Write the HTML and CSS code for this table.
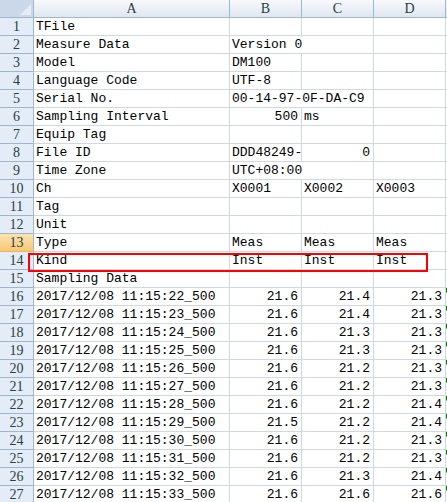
FILE: index.html
```html
<!DOCTYPE html>
<html>
<head>
<meta charset="utf-8">
<link rel="stylesheet" href="styles.css">
</head>
<body>
<div class="sheet">
  <div class="corner"><span class="tri"></span></div>
  <div class="ch">A</div><div class="ch">B</div><div class="ch">C</div><div class="ch">D</div><div class="ch"></div>

  <div class="rh">1</div><div class="c">TFile</div><div class="c"></div><div class="c"></div><div class="c"></div><div class="c"></div>
  <div class="rh">2</div><div class="c">Measure Data</div><div class="c s2">Version 0</div><div class="c"></div><div class="c"></div>
  <div class="rh">3</div><div class="c">Model</div><div class="c">DM100</div><div class="c"></div><div class="c"></div><div class="c"></div>
  <div class="rh">4</div><div class="c">Language Code</div><div class="c">UTF-8</div><div class="c"></div><div class="c"></div><div class="c"></div>
  <div class="rh">5</div><div class="c">Serial No.</div><div class="c s2">00-14-97-0F-DA-C9</div><div class="c"></div><div class="c"></div>
  <div class="rh">6</div><div class="c">Sampling Interval</div><div class="c r">500</div><div class="c">ms</div><div class="c"></div><div class="c"></div>
  <div class="rh">7</div><div class="c">Equip Tag</div><div class="c"></div><div class="c"></div><div class="c"></div><div class="c"></div>
  <div class="rh">8</div><div class="c">File ID</div><div class="c">DDD48249-</div><div class="c r">0</div><div class="c"></div><div class="c"></div>
  <div class="rh">9</div><div class="c">Time Zone</div><div class="c s2">UTC+08:00</div><div class="c"></div><div class="c"></div>
  <div class="rh">10</div><div class="c">Ch</div><div class="c">X0001</div><div class="c">X0002</div><div class="c">X0003</div><div class="c"></div>
  <div class="rh">11</div><div class="c">Tag</div><div class="c"></div><div class="c"></div><div class="c"></div><div class="c"></div>
  <div class="rh">12</div><div class="c">Unit</div><div class="c"></div><div class="c"></div><div class="c"></div><div class="c"></div>
  <div class="rh act">13</div><div class="c">Type</div><div class="c">Meas</div><div class="c">Meas</div><div class="c">Meas</div><div class="c"></div>
  <div class="rh">14</div><div class="c">Kind</div><div class="c">Inst</div><div class="c">Inst</div><div class="c">Inst</div><div class="c"></div>
  <div class="rh">15</div><div class="c">Sampling Data</div><div class="c"></div><div class="c"></div><div class="c"></div><div class="c"></div>
  <div class="rh">16</div><div class="c">2017/12/08 11:15:22_500</div><div class="c r">21.6</div><div class="c r">21.4</div><div class="c r">21.3</div><div class="c e"><span class="err"></span></div>
  <div class="rh">17</div><div class="c">2017/12/08 11:15:23_500</div><div class="c r">21.6</div><div class="c r">21.4</div><div class="c r">21.3</div><div class="c e"><span class="err"></span></div>
  <div class="rh">18</div><div class="c">2017/12/08 11:15:24_500</div><div class="c r">21.6</div><div class="c r">21.3</div><div class="c r">21.3</div><div class="c e"><span class="err"></span></div>
  <div class="rh">19</div><div class="c">2017/12/08 11:15:25_500</div><div class="c r">21.6</div><div class="c r">21.3</div><div class="c r">21.3</div><div class="c e"><span class="err"></span></div>
  <div class="rh">20</div><div class="c">2017/12/08 11:15:26_500</div><div class="c r">21.6</div><div class="c r">21.2</div><div class="c r">21.3</div><div class="c e"><span class="err"></span></div>
  <div class="rh">21</div><div class="c">2017/12/08 11:15:27_500</div><div class="c r">21.6</div><div class="c r">21.2</div><div class="c r">21.3</div><div class="c e"><span class="err"></span></div>
  <div class="rh">22</div><div class="c">2017/12/08 11:15:28_500</div><div class="c r">21.6</div><div class="c r">21.2</div><div class="c r">21.4</div><div class="c e"><span class="err"></span></div>
  <div class="rh">23</div><div class="c">2017/12/08 11:15:29_500</div><div class="c r">21.5</div><div class="c r">21.2</div><div class="c r">21.4</div><div class="c e"><span class="err"></span></div>
  <div class="rh">24</div><div class="c">2017/12/08 11:15:30_500</div><div class="c r">21.6</div><div class="c r">21.2</div><div class="c r">21.3</div><div class="c e"><span class="err"></span></div>
  <div class="rh">25</div><div class="c">2017/12/08 11:15:31_500</div><div class="c r">21.6</div><div class="c r">21.2</div><div class="c r">21.3</div><div class="c e"><span class="err"></span></div>
  <div class="rh">26</div><div class="c">2017/12/08 11:15:32_500</div><div class="c r">21.6</div><div class="c r">21.3</div><div class="c r">21.4</div><div class="c e"><span class="err"></span></div>
  <div class="rh">27</div><div class="c">2017/12/08 11:15:33_500</div><div class="c r">21.6</div><div class="c r">21.6</div><div class="c r">21.6</div><div class="c e"><span class="err"></span></div>

  <div class="mark"></div>
</div>
</body>
</html>
```
FILE: styles.css
```css
html, body {
  margin: 0;
  padding: 0;
  background: #ffffff;
  overflow: hidden;
}
.sheet {
  position: relative;
  display: grid;
  grid-template-columns: 34px 196px 72px 72px 72px 1fr;
  grid-auto-rows: 18px;
  width: 447px;
  height: 502px;
  overflow: hidden;
  font-family: "Liberation Mono", "DejaVu Sans Mono", monospace;
  font-size: 13px;
  color: #000;
}
.corner {
  box-sizing: border-box;
  background: #cbd8ea;
  border-right: 1px solid #9eb6ce;
  border-bottom: 1px solid #9eb6ce;
  display: flex;
  align-items: flex-end;
  justify-content: flex-end;
  padding: 0 2px 2px 0;
}
.tri {
  width: 0;
  height: 0;
  border-left: 11px solid transparent;
  border-bottom: 11px solid #e6edf5;
}
.ch {
  box-sizing: border-box;
  background: linear-gradient(#f7f9fc, #e0e7f0);
  border-right: 1px solid #9eb6ce;
  border-bottom: 1px solid #9eb6ce;
  display: flex;
  align-items: center;
  justify-content: center;
  font-family: "Liberation Serif", serif;
  font-size: 14px;
  color: #27413e;
  line-height: 17px;
}
.rh {
  box-sizing: border-box;
  background: #e4ecf7;
  border-right: 1px solid #9eb6ce;
  border-bottom: 1px solid #9eb6ce;
  display: flex;
  align-items: center;
  justify-content: center;
  font-family: "Liberation Serif", serif;
  font-size: 14px;
  color: #27413e;
  line-height: 17px;
}
.rh.act {
  background: linear-gradient(#fbe3b1, #f6c878);
  border-bottom-color: #f2b44f;
}
.c {
  box-sizing: border-box;
  border-right: 1px solid #d0d7e5;
  border-bottom: 1px solid #d0d7e5;
  padding: 0 2px 0 2px;
  line-height: 17px;
  white-space: nowrap;
  overflow: hidden;
}
.c.s2 {
  grid-column: span 2;
}
.c.r {
  text-align: right;
  padding-right: 3px;
}
.c.e {
  padding: 0;
  border-right: 0;
}
.err {
  display: block;
  width: 0;
  height: 0;
  border-top: 5px solid #008000;
  border-right: 5px solid transparent;
}
.mark {
  position: absolute;
  left: 28px;
  top: 253px;
  width: 400px;
  height: 19px;
  box-sizing: border-box;
  border: 2px solid #ff0000;
  pointer-events: none;
}
```
